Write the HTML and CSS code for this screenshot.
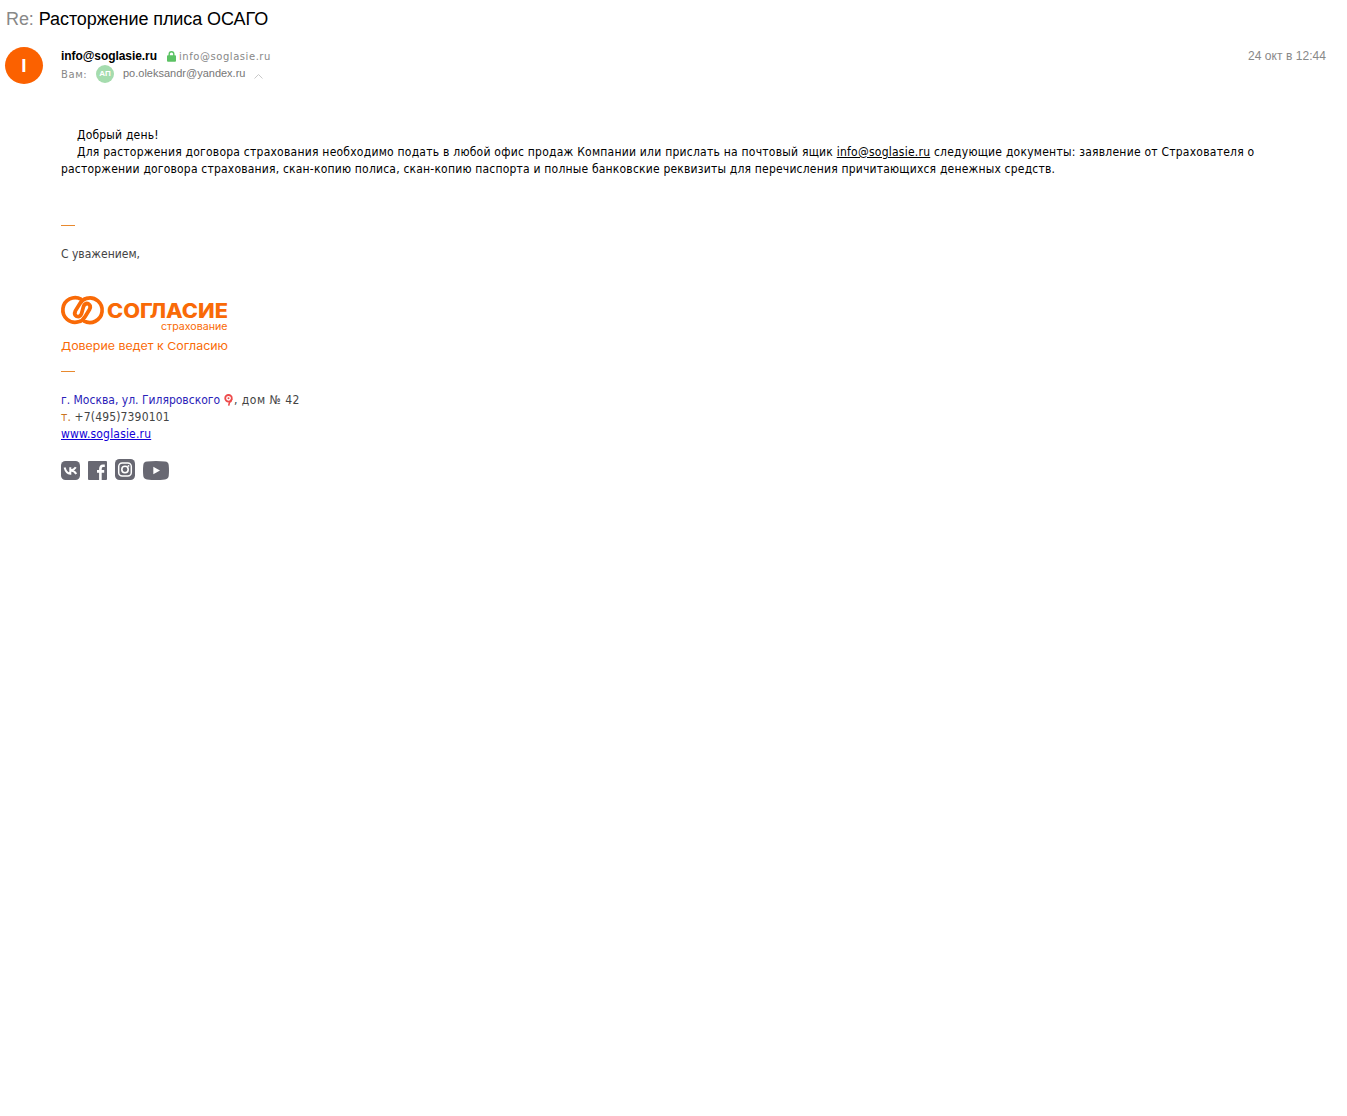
FILE: index.html
```html
<!DOCTYPE html>
<html lang="ru">
  <head>
    <meta charset="UTF-8" />
    <meta name="viewport" content="width=device-width, initial-scale=1.0" />
    <title>Re: Расторжение плиса ОСАГО</title>
    <link rel="stylesheet" href="styles.css">
  </head>
  <body>
    <h1 class="subject"><span class="subject-prefix">Re:</span> Расторжение плиса ОСАГО</h1>

    <div class="header">
      <div class="avatar">I</div>
      <div class="people">
        <div class="sender">
          <span class="sender-name">info@soglasie.ru</span>
          <svg class="lock" width="9" height="11" viewBox="0 0 9 11">
            <path d="M2.2 5V3a2.3 2.3 0 0 1 4.6 0v2" fill="none" stroke="#5cc264" stroke-width="1.4" />
            <rect x="0" y="4.3" width="9" height="6.5" rx="1" fill="#5cc264" />
          </svg>
          <span class="sender-email">info@soglasie.ru</span>
        </div>
        <div class="recipient">
          <span class="recipient-label">Вам:</span>
          <span class="recipient-avatar">АП</span>
          <span class="recipient-email">po.oleksandr@yandex.ru</span>
          <svg class="caret" width="9" height="5" viewBox="0 0 9 5">
            <path d="M.5 4.5l4-4 4 4" fill="none" stroke="#c8c8c8" />
          </svg>
        </div>
      </div>
      <div class="date">24 окт в 12:44</div>
    </div>

    <div class="message">
      <p class="greeting">Добрый день!</p>
      <p class="text">
        <span class="line line-first">Для расторжения договора страхования необходимо подать в любой офис продаж Компании или прислать на почтовый ящик <a href="#">info@soglasie.ru</a> следующие документы: заявление от Страхователя о</span>
        <span class="line line-second">расторжении договора страхования, скан-копию полиса, скан-копию паспорта и полные банковские реквизиты для перечисления причитающихся денежных средств.</span>
      </p>

      <div class="signature">
        <div class="divider"></div>
        <p class="regards">С уважением,</p>

        <svg class="logo" width="168" height="60" viewBox="0 0 168 60">
          <path d="M20.3 4.3A12.3 12.3 0 1 0 17.5 26.8Q21.5 26 24.2 21.5L28.6 14.3Q30.4 10.4 27.4 8.8Q24.4 7.6 22.6 11.2L20.4 19Q18.6 22.6 15.6 21.4Q12.6 19.8 14.4 15.9L18.8 8.7Q21.5 4.2 25.5 3.4A12.3 12.3 0 1 1 22.7 25.9" fill="none" stroke="#f96a07" stroke-width="3.7" />
          <text class="logo-name" x="46" y="22.5" textLength="121" lengthAdjust="spacingAndGlyphs">СОГЛАСИЕ</text>
          <text class="logo-kind" x="100" y="34.5" textLength="66.5" lengthAdjust="spacingAndGlyphs">страхование</text>
          <text class="logo-slogan" x="0" y="55" textLength="167" lengthAdjust="spacingAndGlyphs">Доверие ведет к Согласию</text>
        </svg>

        <div class="divider"></div>

        <div class="contacts">
          <div class="address">
            <span class="address-link">г. Москва, ул. Гиляровского</span>
            <svg class="pin" width="9" height="12" viewBox="0 0 9 12">
              <circle cx="4.5" cy="4.3" r="3.3" fill="#fff" stroke="#ed4a4a" stroke-width="1.8" />
              <circle cx="4.5" cy="4.3" r="1" fill="#ed4a4a" />
              <path d="M7.8 5Q7.2 7.6 5.5 8.4L4.7 11.6" fill="none" stroke="#ed4a4a" stroke-width="1.6" />
            </svg><span class="address-house">, дом № 42</span>
          </div>
          <div class="phone"><span class="phone-label">т.</span> +7(495)7390101</div>
          <div><a class="site" href="#">www.soglasie.ru</a></div>
        </div>

        <div class="socials">
          <svg width="19" height="19" viewBox="0 0 19 19">
            <rect width="19" height="19" rx="4.5" fill="#686872" />
            <path d="M3.6 6.5Q5.2 12.5 9.3 12.7V6.2M14.8 6.3Q13.2 9 9.8 9.5Q13.4 9.8 15.2 12.9" fill="none" stroke="#fff" stroke-width="2" />
          </svg>
          <svg width="19" height="19" viewBox="0 0 19 19">
            <rect width="19" height="19" rx="1" fill="#686872" />
            <path d="M12.4 19V8Q12.4 4.8 15 4.8H16.8M9 10.4H16.2" fill="none" stroke="#fff" stroke-width="2.6" />
          </svg>
          <svg width="20" height="21" viewBox="0 0 20 21">
            <rect width="20" height="21" rx="4.5" fill="#686872" />
            <rect x="3.7" y="4" width="12.6" height="13" rx="3.5" fill="none" stroke="#fff" stroke-width="1.5" />
            <circle cx="10" cy="10.5" r="3.2" fill="none" stroke="#fff" stroke-width="1.6" />
            <circle cx="13.5" cy="6.9" r=".9" fill="#fff" />
          </svg>
          <svg width="26" height="19" viewBox="0 0 26 19">
            <path d="M4 .6Q13-.5 22 .6Q25.4 1 25.7 4Q26.3 9.5 25.7 15Q25.4 18 22 18.4Q13 19.5 4 18.4Q.6 18 .3 15Q-.3 9.5 .3 4Q.6 1 4 .6Z" fill="#686872" />
            <path d="M10.3 5.8L17 9.5L10.3 13.2Z" fill="#fff" />
          </svg>
        </div>
      </div>
    </div>
  </body>
</html>
```
FILE: styles.css
```css
* {
  margin: 0;
  padding: 0;
  box-sizing: border-box;
}

body {
  font-family: "DejaVu Sans Condensed", "DejaVu Sans", sans-serif;
  font-size: 12px;
  line-height: 17px;
  background: #fff;
  color: #000;
}

svg {
  display: block;
  flex-shrink: 0;
}

.subject {
  padding: 8px 6px 0;
  font-family: "Liberation Sans", Arial, sans-serif;
  font-size: 18px;
  font-weight: normal;
  line-height: 22px;
  letter-spacing: -0.08px;
}

.subject-prefix {
  color: #888;
}

.header {
  display: flex;
  align-items: flex-start;
  padding: 17px 21px 0 5px;
  font-family: "Liberation Sans", Arial, sans-serif;
}

.avatar {
  width: 38px;
  height: 37px;
  border-radius: 50%;
  background: #fb6100;
  color: #fff;
  font-size: 19px;
  font-weight: bold;
  line-height: 38px;
  text-align: center;
}

.people {
  flex: 1;
  margin-left: 18px;
}

.sender,
.recipient {
  display: flex;
  align-items: center;
  height: 18px;
}

.sender-name {
  width: 106px;
  font-size: 12px;
  font-weight: bold;
  letter-spacing: -0.07px;
}

.sender-email,
.recipient-label {
  font-family: "DejaVu Sans", sans-serif;
  font-size: 10px;
  color: #888;
}

.sender-email {
  margin-left: 3px;
  letter-spacing: 0.55px;
}

.recipient-label {
  width: 35px;
  letter-spacing: 0.6px;
}

.recipient-avatar {
  width: 18px;
  height: 18px;
  border-radius: 50%;
  background: #a5dcae;
  color: #fff;
  font-size: 8px;
  font-weight: bold;
  line-height: 18px;
  text-align: center;
}

.recipient-email {
  margin: -2px 9px 0;
  font-size: 11px;
  color: #777;
}

.caret {
  margin-top: 4px;
}

.date {
  font-size: 12px;
  line-height: 18px;
  letter-spacing: 0.05px;
  color: #888;
}

.message {
  padding: 43px 20px 0 61px;
}

.greeting {
  padding-left: 16px;
  letter-spacing: 0.2px;
}

.line {
  display: block;
  white-space: nowrap;
}

.line-first {
  padding-left: 16px;
  letter-spacing: 0.235px;
}

.line-second {
  letter-spacing: 0.195px;
}

.text a {
  color: #000;
}

.signature {
  padding-top: 47px;
  color: #444;
}

.divider {
  width: 14px;
  height: 1px;
  background: #e8892e;
}

.regards {
  margin-top: 20px;
}

.logo {
  margin: 32px 0 16px;
  fill: #f96a07;
  overflow: visible;
}

.logo-name {
  font-family: Inter, sans-serif;
  font-size: 20px;
  font-weight: 800;
}

.logo-kind,
.logo-slogan {
  font-family: Inter, sans-serif;
  font-size: 9.5px;
}

.logo-slogan {
  font-size: 11px;
}

.contacts {
  margin-top: 20px;
}

.address {
  display: flex;
  align-items: center;
}

.address-link {
  width: 163px;
  color: #2a22b8;
}

.pin {
  margin-top: -2px;
}

.address-house {
  margin-left: 1px;
  letter-spacing: 0.5px;
}

.phone {
  letter-spacing: 0.15px;
}

.phone-label {
  color: #c87420;
}

.site {
  color: #1200d8;
  letter-spacing: 0.18px;
}

.socials {
  display: flex;
  align-items: flex-end;
  gap: 8px;
  margin-top: 16px;
}
```
